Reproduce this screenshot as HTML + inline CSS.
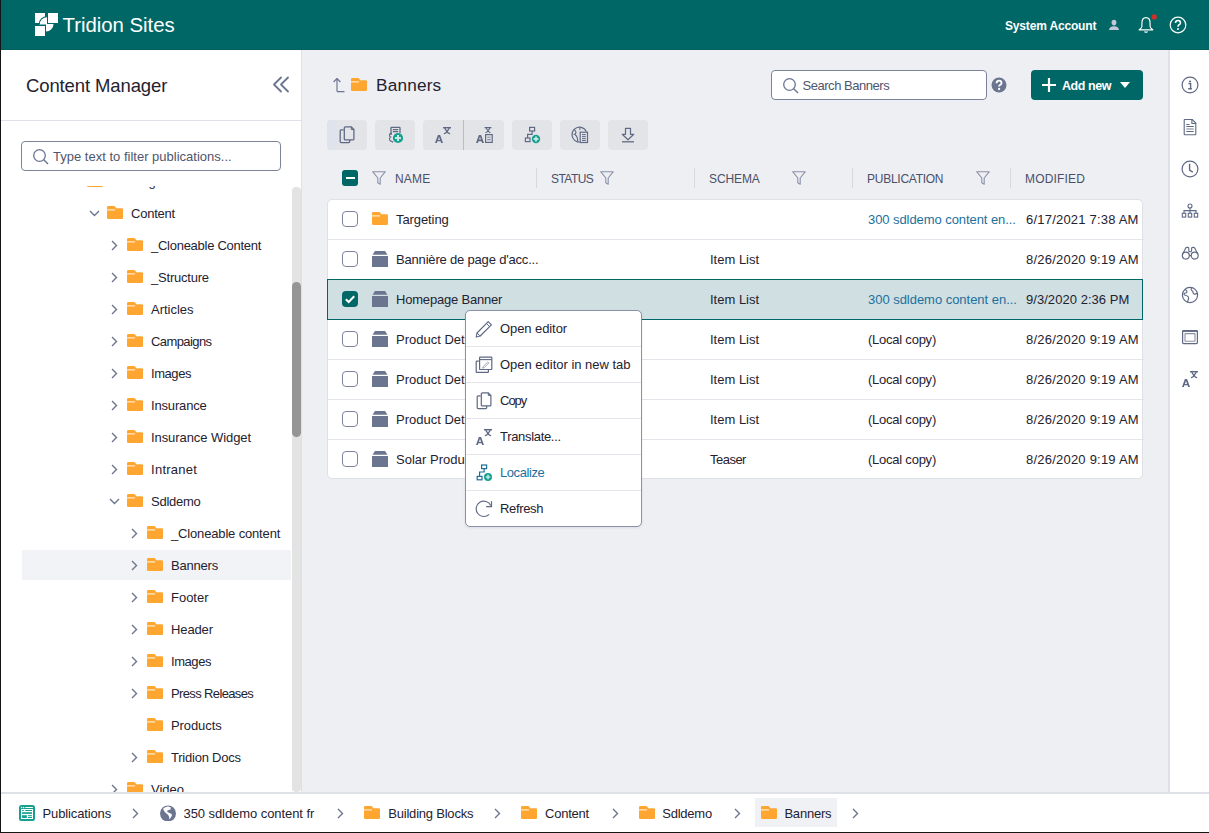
<!DOCTYPE html>
<html><head><meta charset="utf-8">
<style>
*{box-sizing:border-box;margin:0;padding:0}
html,body{width:1209px;height:833px;overflow:hidden;background:#fff}
body{position:relative;font-family:"Liberation Sans",sans-serif;font-size:13px;color:#1f2230}
.a{position:absolute}
.t{position:absolute;white-space:nowrap;line-height:16px}
svg{display:block}
</style></head><body>
<svg width="0" height="0" style="position:absolute">
<defs>
<symbol id="fold" viewBox="0 0 16 13"><path d="M0,1.2Q0,0 1.2,0H7.2Q7.8,0 8.2,.6L9.2,2.2H14.8Q16,2.2 16,3.4V11.8Q16,13 14.8,13H1.2Q0,13 0,11.8Z" fill="#ffa630"/><rect x="0" y="3" width="8" height="1.7" fill="#ffd79a"/></symbol>
<symbol id="comp" viewBox="0 0 16 16"><path d="M3,0H13L15.5,3.8H.5Z" fill="#6b7590"/><rect x="0" y="5" width="16" height="11" fill="#6b7590"/></symbol>
<symbol id="chr" viewBox="0 0 7 11"><path d="M1,1L5.5,5.5L1,10" fill="none" stroke="#6b7590" stroke-width="1.4"/></symbol>
<symbol id="chd" viewBox="0 0 11 7"><path d="M1,1L5.5,5.5L10,1" fill="none" stroke="#6b7590" stroke-width="1.4"/></symbol>
<symbol id="funnel" viewBox="0 0 14 14"><path d="M.7,.7H13.3L8.2,7V13.2L5.8,11.8V7Z" fill="none" stroke="#8a91a8" stroke-width="1.1" stroke-linejoin="round"/></symbol>
<symbol id="trA" viewBox="0 0 16 16"><path fill-rule="evenodd" d="M0,16L2.9,8.1H5.1L8,16H6.2L5.6,14.2H2.4L1.8,16ZM3,12.9H5L4,9.7Z" fill="#5f6983"/><path d="M8,.7H16" stroke="#5f6983" stroke-width="1.4"/><path d="M9.9,1.3L11.8,4.4M14.1,1.3L12.2,4.4M12,4.2Q11.4,6 9.4,6.6M12,4.2Q12.6,6 14.6,6.6" stroke="#5f6983" stroke-width="1.25" fill="none" stroke-linecap="round"/></symbol>
<symbol id="hg" viewBox="0 0 8 7"><path d="M0,.7H8" stroke="#5f6983" stroke-width="1.4"/><path d="M1.9,1.3L3.8,4.4M6.1,1.3L4.2,4.4M4,4.2Q3.4,6 1.4,6.6M4,4.2Q4.6,6 6.6,6.6" stroke="#5f6983" stroke-width="1.25" fill="none" stroke-linecap="round"/></symbol>
<symbol id="Aglyph" viewBox="0 0 8 8"><path fill-rule="evenodd" d="M0,8L2.9,0H5.1L8,8H6.1L5.5,6.2H2.5L1.9,8ZM3,4.6H5L4,1.8Z" fill="#5f6983"/></symbol>
</defs>
</svg>

<!-- frame borders -->
<div class="a" style="left:0;top:0;width:1px;height:833px;background:#141414;z-index:50"></div>
<div class="a" style="left:0;top:832px;width:1209px;height:1px;background:#141414;z-index:50"></div>

<!-- HEADER -->
<div class="a" style="left:0;top:0;width:1209px;height:50px;background:#006767;border-bottom:1px solid #005f5f"></div>
<svg class="a" style="left:35px;top:13px" width="24" height="24" viewBox="0 0 24 24">
<rect x="0" y="0" width="10" height="10" fill="#fff"/>
<rect x="13" y="0" width="10" height="10" fill="#fff"/>
<rect x="0" y="13" width="10" height="10" fill="#fff"/>
<path d="M12,11.5H4.2A7.8,7.8 0 0 1 12,3.7Z" fill="#fff"/>
<path d="M4.2,11.5A7.8,7.8 0 0 1 12,3.7" fill="none" stroke="#006767" stroke-width="1.1"/>
<path d="M11,11H18.5A7.5,7.5 0 0 1 11,18.5Z" fill="#fff"/>
</svg>
<div class="t" style="left:62.5px;top:12.5px;font-size:20.4px;line-height:24px;color:#fff;letter-spacing:-0.033px">Tridion Sites</div>
<div class="t" style="left:1005px;top:18px;font-size:12px;font-weight:bold;color:#fff;letter-spacing:-0.169px">System Account</div>
<svg class="a" style="left:1108px;top:19px" width="12" height="12" viewBox="0 0 12 12"><ellipse cx="6" cy="3.6" rx="2.4" ry="2.8" fill="#c3c7d8"/><path d="M1,11Q1.3,7.6 6,7.3Q10.7,7.6 11,11Z" fill="#c3c7d8"/></svg>
<svg class="a" style="left:1137px;top:14px" width="22" height="22" viewBox="0 0 22 22">
<path d="M9,3.6C5.9,3.6 4.9,6.4 4.9,9.4V12.4C4.9,13.8 3.6,14.8 2.2,15.8H15.8C14.4,14.8 13.1,13.8 13.1,12.4V9.4C13.1,6.4 12.1,3.6 9,3.6Z" fill="none" stroke="#fff" stroke-width="1.15" stroke-linejoin="round"/>
<path d="M7.5,17.5Q9,19 10.5,17.5" fill="none" stroke="#fff" stroke-width="1.1"/>
<circle cx="17.2" cy="3" r="2.7" fill="#c8322b"/>
</svg>
<svg class="a" style="left:1169px;top:16px" width="18" height="18" viewBox="0 0 18 18">
<circle cx="9" cy="9" r="7.8" fill="none" stroke="#fff" stroke-width="1.2"/>
<path d="M6.5,7Q6.5,4.5 9,4.5Q11.5,4.5 11.5,6.8Q11.5,8.3 9.8,9Q9,9.5 9,10.8" fill="none" stroke="#fff" stroke-width="1.5"/>
<circle cx="9" cy="13" r="1" fill="#fff"/>
</svg>

<!-- LEFT PANEL -->
<div class="a" style="left:1px;top:50px;width:300px;height:742px;background:#fff"></div>
<div class="a" style="left:301px;top:50px;width:1px;height:742px;background:#dde0e6"></div>
<div class="t" style="left:26px;top:75px;font-size:18.5px;line-height:22px;color:#1f2230;letter-spacing:-0.114px">Content Manager</div>
<svg class="a" style="left:272px;top:76px" width="18" height="18" viewBox="0 0 18 18"><path d="M9,1.5L2,8.5L9,15.5M16,1.5L9,8.5L16,15.5" fill="none" stroke="#6b7590" stroke-width="1.8" stroke-linecap="round" stroke-linejoin="round"/></svg>
<div class="a" style="left:1px;top:120px;width:300px;height:1px;background:#dfe1e8"></div>
<div class="a" style="left:21px;top:141px;width:260px;height:30px;border:1px solid #7c849c;border-radius:4px;background:#fff"></div>
<svg class="a" style="left:32px;top:148px" width="18" height="18" viewBox="0 0 18 18"><circle cx="7.5" cy="7.5" r="5.8" fill="none" stroke="#6b7590" stroke-width="1.3"/><path d="M11.7,11.7L16,16" stroke="#6b7590" stroke-width="1.4"/></svg>
<div class="t" style="left:53px;top:149px;color:#4f566d;letter-spacing:0.006px">Type text to filter publications...</div>

<!-- tree -->
<div class="a" id="tree" style="left:1px;top:186px;width:291px;height:606px;overflow:hidden">
<svg class="a" style="left:67.5px;top:-8.5px" width="11" height="7"><use href="#chd"/></svg>
<svg class="a" style="left:86px;top:-12px" width="16" height="13"><use href="#fold"/></svg>
<div class="t" style="left:110px;top:-12px;letter-spacing:-0.214px">Building Blocks</div>
<svg class="a" style="left:87.5px;top:23.5px" width="11" height="7"><use href="#chd"/></svg>
<svg class="a" style="left:106px;top:20px" width="16" height="13"><use href="#fold"/></svg>
<div class="t" style="left:130px;top:20px;letter-spacing:-0.233px">Content</div>
<svg class="a" style="left:109.5px;top:54px" width="7" height="11"><use href="#chr"/></svg>
<svg class="a" style="left:126px;top:52px" width="16" height="13"><use href="#fold"/></svg>
<div class="t" style="left:150px;top:52px;letter-spacing:-0.265px">_Cloneable Content</div>
<svg class="a" style="left:109.5px;top:86px" width="7" height="11"><use href="#chr"/></svg>
<svg class="a" style="left:126px;top:84px" width="16" height="13"><use href="#fold"/></svg>
<div class="t" style="left:150px;top:84px;letter-spacing:-0.211px">_Structure</div>
<svg class="a" style="left:109.5px;top:118px" width="7" height="11"><use href="#chr"/></svg>
<svg class="a" style="left:126px;top:116px" width="16" height="13"><use href="#fold"/></svg>
<div class="t" style="left:150px;top:116px;letter-spacing:-0.014px">Articles</div>
<svg class="a" style="left:109.5px;top:150px" width="7" height="11"><use href="#chr"/></svg>
<svg class="a" style="left:126px;top:148px" width="16" height="13"><use href="#fold"/></svg>
<div class="t" style="left:150px;top:148px;letter-spacing:-0.588px">Campaigns</div>
<svg class="a" style="left:109.5px;top:182px" width="7" height="11"><use href="#chr"/></svg>
<svg class="a" style="left:126px;top:180px" width="16" height="13"><use href="#fold"/></svg>
<div class="t" style="left:150px;top:180px;letter-spacing:-0.44px">Images</div>
<svg class="a" style="left:109.5px;top:214px" width="7" height="11"><use href="#chr"/></svg>
<svg class="a" style="left:126px;top:212px" width="16" height="13"><use href="#fold"/></svg>
<div class="t" style="left:150px;top:212px;letter-spacing:-0.162px">Insurance</div>
<svg class="a" style="left:109.5px;top:246px" width="7" height="11"><use href="#chr"/></svg>
<svg class="a" style="left:126px;top:244px" width="16" height="13"><use href="#fold"/></svg>
<div class="t" style="left:150px;top:244px;letter-spacing:-0.073px">Insurance Widget</div>
<svg class="a" style="left:109.5px;top:278px" width="7" height="11"><use href="#chr"/></svg>
<svg class="a" style="left:126px;top:276px" width="16" height="13"><use href="#fold"/></svg>
<div class="t" style="left:150px;top:276px;letter-spacing:0.271px">Intranet</div>
<svg class="a" style="left:107.5px;top:311.5px" width="11" height="7"><use href="#chd"/></svg>
<svg class="a" style="left:126px;top:308px" width="16" height="13"><use href="#fold"/></svg>
<div class="t" style="left:150px;top:308px;letter-spacing:-0.25px">Sdldemo</div>
<svg class="a" style="left:129.5px;top:342px" width="7" height="11"><use href="#chr"/></svg>
<svg class="a" style="left:146px;top:340px" width="16" height="13"><use href="#fold"/></svg>
<div class="t" style="left:170px;top:340px;letter-spacing:-0.159px">_Cloneable content</div>
<div class="a" style="left:21px;top:364px;width:269px;height:30px;background:#f2f3f6"></div>
<svg class="a" style="left:129.5px;top:374px" width="7" height="11"><use href="#chr"/></svg>
<svg class="a" style="left:146px;top:372px" width="16" height="13"><use href="#fold"/></svg>
<div class="t" style="left:170px;top:372px;letter-spacing:-0.2px">Banners</div>
<svg class="a" style="left:129.5px;top:406px" width="7" height="11"><use href="#chr"/></svg>
<svg class="a" style="left:146px;top:404px" width="16" height="13"><use href="#fold"/></svg>
<div class="t" style="left:170px;top:404px;letter-spacing:-0.02px">Footer</div>
<svg class="a" style="left:129.5px;top:438px" width="7" height="11"><use href="#chr"/></svg>
<svg class="a" style="left:146px;top:436px" width="16" height="13"><use href="#fold"/></svg>
<div class="t" style="left:170px;top:436px;letter-spacing:-0.12px">Header</div>
<svg class="a" style="left:129.5px;top:470px" width="7" height="11"><use href="#chr"/></svg>
<svg class="a" style="left:146px;top:468px" width="16" height="13"><use href="#fold"/></svg>
<div class="t" style="left:170px;top:468px;letter-spacing:-0.44px">Images</div>
<svg class="a" style="left:129.5px;top:502px" width="7" height="11"><use href="#chr"/></svg>
<svg class="a" style="left:146px;top:500px" width="16" height="13"><use href="#fold"/></svg>
<div class="t" style="left:170px;top:500px;letter-spacing:-0.631px">Press Releases</div>
<svg class="a" style="left:146px;top:532px" width="16" height="13"><use href="#fold"/></svg>
<div class="t" style="left:170px;top:532px;letter-spacing:-0.086px">Products</div>
<svg class="a" style="left:129.5px;top:566px" width="7" height="11"><use href="#chr"/></svg>
<svg class="a" style="left:146px;top:564px" width="16" height="13"><use href="#fold"/></svg>
<div class="t" style="left:170px;top:564px;letter-spacing:-0.218px">Tridion Docs</div>
<svg class="a" style="left:109.5px;top:598px" width="7" height="11"><use href="#chr"/></svg>
<svg class="a" style="left:126px;top:596px" width="16" height="13"><use href="#fold"/></svg>
<div class="t" style="left:150px;top:596px">Video</div>

</div>
<!-- scrollbar -->
<div class="a" style="left:292px;top:187px;width:9px;height:605px;background:#e3e3e3;border-radius:4px 4px 4px 4px"></div>
<div class="a" style="left:292px;top:282px;width:9px;height:155px;background:#959595;border-radius:4.5px"></div>

<!-- MAIN -->
<div class="a" style="left:302px;top:50px;width:867px;height:742px;background:#eeeff3"></div>
<!-- heading -->
<svg class="a" style="left:332px;top:77px" width="14" height="16" viewBox="0 0 14 16"><path d="M5,14.6H12.5M5,14.6V1.5M1.6,5L5,1.5L8.4,5" fill="none" stroke="#6b7590" stroke-width="1.15" stroke-linejoin="round"/></svg>
<svg class="a" style="left:351px;top:78px" width="16" height="13"><use href="#fold"/></svg>
<div class="t" style="left:376px;top:74px;font-size:17.2px;line-height:22px;color:#1f2230;letter-spacing:0.2px">Banners</div>
<!-- search -->
<div class="a" style="left:771px;top:70px;width:216px;height:30px;border:1px solid #7c849c;border-radius:4px;background:#fff"></div>
<svg class="a" style="left:782px;top:77px" width="18" height="18" viewBox="0 0 18 18"><circle cx="7.5" cy="7.5" r="5.8" fill="none" stroke="#6b7590" stroke-width="1.3"/><path d="M11.7,11.7L16,16" stroke="#6b7590" stroke-width="1.4"/></svg>
<div class="t" style="left:802.5px;top:78px;color:#4f566d;letter-spacing:-0.462px">Search Banners</div>
<svg class="a" style="left:991px;top:76.5px" width="16" height="16" viewBox="0 0 16 16"><circle cx="8" cy="8" r="7.5" fill="#6b7590"/><path d="M5.6,6.2Q5.6,3.6 8,3.6Q10.5,3.6 10.5,5.9Q10.5,7.3 9,8Q8.1,8.5 8.1,9.6" fill="none" stroke="#fff" stroke-width="1.9"/><circle cx="8.1" cy="12" r="1.15" fill="#fff"/></svg>
<!-- add new -->
<div class="a" style="left:1031px;top:70px;width:112px;height:30px;background:#006767;border-radius:4px"></div>
<svg class="a" style="left:1042px;top:78px" width="14" height="14" viewBox="0 0 14 14"><path d="M7,0V14M0,7H14" stroke="#fff" stroke-width="2.2"/></svg>
<div class="t" style="left:1062px;top:78px;font-size:12.5px;font-weight:bold;color:#fff;letter-spacing:-0.417px">Add new</div>
<svg class="a" style="left:1120px;top:82px" width="10" height="6" viewBox="0 0 10 6"><path d="M0,0H10L5,6Z" fill="#fff"/></svg>

<!-- toolbar -->
<div class="a" style="left:327px;top:120px;width:40px;height:30px;background:#e3e4e8;border-radius:4px"></div>
<div class="a" style="left:375px;top:120px;width:40px;height:30px;background:#e3e4e8;border-radius:4px"></div>
<div class="a" style="left:423px;top:120px;width:81px;height:30px;background:#e3e4e8;border-radius:4px"></div>
<div class="a" style="left:463px;top:120px;width:1px;height:30px;background:#b9bdc9"></div>
<div class="a" style="left:512px;top:120px;width:40px;height:30px;background:#e3e4e8;border-radius:4px"></div>
<div class="a" style="left:560px;top:120px;width:40px;height:30px;background:#e3e4e8;border-radius:4px"></div>
<div class="a" style="left:608px;top:120px;width:40px;height:30px;background:#e3e4e8;border-radius:4px"></div>
<!-- toolbar icons -->
<div class="a" style="left:327px;top:120px;width:10px;height:30px;background:#dfe3ec;border-radius:4px 0 0 4px"></div>
<svg class="a" style="left:339px;top:126px" width="16" height="18" viewBox="0 0 16 18"><path d="M4.6,3.8H2.2Q1.2,3.8 1.2,4.8V15.6Q1.2,16.6 2.2,16.6H9.7Q10.7,16.6 10.7,15.6V13.7" fill="none" stroke="#5f6983" stroke-width="1.3"/><path d="M6.3,.9H12.3L14.9,3.5V12.9Q14.9,13.9 13.9,13.9H6.3Q5.3,13.9 5.3,12.9V1.9Q5.3,.9 6.3,.9Z" fill="none" stroke="#5f6983" stroke-width="1.3"/><path d="M12.3,.9V3.5H14.9" fill="none" stroke="#5f6983" stroke-width="1"/></svg>
<svg class="a" style="left:387px;top:126px" width="18" height="18" viewBox="0 0 18 18"><path d="M4,9V2Q4,1.3 4.7,1.3H12.3Q13,1.3 13,2V7" fill="none" stroke="#5f6983" stroke-width="1.3"/><path d="M5.8,3.6H11.2M5.8,5.6H11.2" stroke="#5f6983" stroke-width="1.2"/><path d="M5,7.4Q2.5,7.4 2.5,9.2Q2.5,10.6 3.6,11Q2.5,11.5 2.5,13Q2.5,15 5,15.5Q5.6,16 6.2,16.3" fill="none" stroke="#5f6983" stroke-width="1.1"/><circle cx="11" cy="12" r="5.1" fill="#18a090"/><path d="M11,9V15M8,12H14" stroke="#c8ece5" stroke-width="2"/></svg>
<svg class="a" style="left:435px;top:127px" width="16" height="16"><use href="#trA"/></svg>
<svg class="a" style="left:476px;top:127px" width="8" height="8" style="" viewBox="0 0 8 8"></svg>
<svg class="a" style="left:476px;top:135px" width="8" height="8"><use href="#Aglyph"/></svg>
<svg class="a" style="left:484px;top:127px" width="8" height="6"><use href="#hg"/></svg>
<svg class="a" style="left:485px;top:134px" width="8" height="9" viewBox="0 0 8 9"><rect x=".6" y=".6" width="6.6" height="7.8" fill="none" stroke="#5f6983" stroke-width="1.2"/><path d="M2.2,3.2H5.6M2.2,5.6H5.6" stroke="#5f6983" stroke-width="1.1" opacity=".7"/></svg>
<svg class="a" style="left:524px;top:126px" width="18" height="18" viewBox="0 0 18 18"><rect x="5.6" y="1.4" width="5" height="3.6" fill="none" stroke="#5f6983" stroke-width="1.2"/><path d="M8.1,5V8.4H3.6V12" fill="none" stroke="#5f6983" stroke-width="1.2"/><rect x="1.4" y="12" width="4.6" height="3.6" fill="none" stroke="#5f6983" stroke-width="1.2"/><circle cx="12" cy="13" r="4.2" fill="#18a090"/><path d="M12,10.6V15.4M9.6,13H14.4" stroke="#bfe9e2" stroke-width="1.8"/></svg>
<svg class="a" style="left:571px;top:126px" width="18" height="18" viewBox="0 0 18 18"><path d="M8.5,16.2A7.5,7.5 0 1 1 15.3,5.5" fill="none" stroke="#5f6983" stroke-width="1.2"/><path d="M3.2,3.3Q5,5 5,6.5Q4.5,8 3.5,8.3Q5.5,9.5 6.2,11.5Q6.5,14 7,16" fill="none" stroke="#5f6983" stroke-width="1.1"/><path d="M9,1.5Q8.5,3 9.2,4" fill="none" stroke="#5f6983" stroke-width="1.1"/><rect x="9.2" y="6.2" width="7.3" height="10.3" fill="#e3e4e8" stroke="#5f6983" stroke-width="1.2"/><path d="M11,8.6H14.8M11,10.6H14.8M11,12.6H14.8M11,14.5H14.8" stroke="#5f6983" stroke-width="1"/></svg>
<svg class="a" style="left:620px;top:126px" width="16" height="18" viewBox="0 0 16 18"><path d="M5.5,2.3H10.5V8.3H13.8L8,13.8L2.2,8.3H5.5Z" fill="none" stroke="#5f6983" stroke-width="1.2" stroke-linejoin="round"/><path d="M2,15.8H14" stroke="#5f6983" stroke-width="1.3"/></svg>


<!-- table header -->
<div class="a" style="left:342px;top:170px;width:16px;height:16px;background:#006767;border-radius:3px"></div>
<div class="a" style="left:345.5px;top:177px;width:9px;height:2px;background:#fff"></div>
<svg class="a" style="left:372px;top:171px" width="14" height="14"><use href="#funnel"/></svg>
<div class="t" style="left:395px;top:171px;font-size:12px;color:#4a5068;letter-spacing:0.2px">NAME</div>
<div class="a" style="left:536px;top:168px;width:1px;height:20px;background:#d6d9e0"></div>
<div class="t" style="left:551px;top:171px;font-size:12px;color:#4a5068;letter-spacing:-0.54px">STATUS</div>
<svg class="a" style="left:600px;top:171px" width="14" height="14"><use href="#funnel"/></svg>
<div class="a" style="left:694px;top:168px;width:1px;height:20px;background:#d6d9e0"></div>
<div class="t" style="left:709px;top:171px;font-size:12px;color:#4a5068;letter-spacing:-0.1px">SCHEMA</div>
<svg class="a" style="left:792px;top:171px" width="14" height="14"><use href="#funnel"/></svg>
<div class="a" style="left:852px;top:168px;width:1px;height:20px;background:#d6d9e0"></div>
<div class="t" style="left:867px;top:171px;font-size:12px;color:#4a5068;letter-spacing:-0.26px">PUBLICATION</div>
<svg class="a" style="left:976px;top:171px" width="14" height="14"><use href="#funnel"/></svg>
<div class="a" style="left:1010px;top:168px;width:1px;height:20px;background:#d6d9e0"></div>
<div class="t" style="left:1025px;top:171px;font-size:12px;color:#4a5068;letter-spacing:0.171px">MODIFIED</div>

<!-- table -->
<div class="a" id="table" style="left:327px;top:199px;width:816px;height:280px;background:#fff;border:1px solid #dfe1e8;border-radius:5px">
<div class="a" style="left:14px;top:11px;width:16px;height:16px;border:1.5px solid #7c849c;border-radius:4px"></div>
<svg class="a" style="left:44px;top:12px" width="16" height="13"><use href="#fold"/></svg>
<div class="t" style="left:68px;top:12px;letter-spacing:-0.088px">Targeting</div>
<div class="t" style="left:540px;top:12px;color:#1d6f9c;letter-spacing:-0.071px">300 sdldemo content en...</div>
<div class="t" style="left:698px;top:12px;letter-spacing:0.206px">6/17/2021 7:38 AM</div>
<div class="a" style="left:0;top:39px;width:816px;height:1px;background:#e3e5ea"></div>
<div class="a" style="left:14px;top:51px;width:16px;height:16px;border:1.5px solid #7c849c;border-radius:4px"></div>
<svg class="a" style="left:44px;top:51px" width="16" height="16"><use href="#comp"/></svg>
<div class="t" style="left:68px;top:52px;letter-spacing:-0.183px">Bannière de page d'acc...</div>
<div class="t" style="left:382px;top:52px;letter-spacing:0.0px">Item List</div>
<div class="t" style="left:698px;top:52px;letter-spacing:0.219px">8/26/2020 9:19 AM</div>
<div class="a" style="left:-1px;top:79px;width:816px;height:41px;background:#cfdfe2;border:1px solid #006767"></div>
<svg class="a" style="left:14px;top:91px" width="16" height="16" viewBox="0 0 16 16"><rect width="16" height="16" rx="4" fill="#006767"/><path d="M3.8,8.2L6.7,11L12.2,5.2" fill="none" stroke="#fff" stroke-width="2"/></svg>
<svg class="a" style="left:44px;top:91px" width="16" height="16"><use href="#comp"/></svg>
<div class="t" style="left:68px;top:92px;letter-spacing:-0.2px">Homepage Banner</div>
<div class="t" style="left:382px;top:92px;letter-spacing:0.0px">Item List</div>
<div class="t" style="left:540px;top:92px;color:#1d6f9c;letter-spacing:-0.029px">300 sdldemo content en...</div>
<div class="t" style="left:698px;top:92px;letter-spacing:0.047px">9/3/2020 2:36 PM</div>
<div class="a" style="left:14px;top:131px;width:16px;height:16px;border:1.5px solid #7c849c;border-radius:4px"></div>
<svg class="a" style="left:44px;top:131px" width="16" height="16"><use href="#comp"/></svg>
<div class="t" style="left:68px;top:132px">Product Details 1</div>
<div class="t" style="left:382px;top:132px;letter-spacing:0.0px">Item List</div>
<div class="t" style="left:540px;top:132px;color:#1f2230;letter-spacing:-0.236px">(Local copy)</div>
<div class="t" style="left:698px;top:132px;letter-spacing:0.219px">8/26/2020 9:19 AM</div>
<div class="a" style="left:0;top:159px;width:816px;height:1px;background:#e3e5ea"></div>
<div class="a" style="left:14px;top:171px;width:16px;height:16px;border:1.5px solid #7c849c;border-radius:4px"></div>
<svg class="a" style="left:44px;top:171px" width="16" height="16"><use href="#comp"/></svg>
<div class="t" style="left:68px;top:172px">Product Details 2</div>
<div class="t" style="left:382px;top:172px;letter-spacing:0.0px">Item List</div>
<div class="t" style="left:540px;top:172px;color:#1f2230;letter-spacing:-0.236px">(Local copy)</div>
<div class="t" style="left:698px;top:172px;letter-spacing:0.219px">8/26/2020 9:19 AM</div>
<div class="a" style="left:0;top:199px;width:816px;height:1px;background:#e3e5ea"></div>
<div class="a" style="left:14px;top:211px;width:16px;height:16px;border:1.5px solid #7c849c;border-radius:4px"></div>
<svg class="a" style="left:44px;top:211px" width="16" height="16"><use href="#comp"/></svg>
<div class="t" style="left:68px;top:212px">Product Details 3</div>
<div class="t" style="left:382px;top:212px;letter-spacing:0.0px">Item List</div>
<div class="t" style="left:540px;top:212px;color:#1f2230;letter-spacing:-0.236px">(Local copy)</div>
<div class="t" style="left:698px;top:212px;letter-spacing:0.219px">8/26/2020 9:19 AM</div>
<div class="a" style="left:0;top:239px;width:816px;height:1px;background:#e3e5ea"></div>
<div class="a" style="left:14px;top:251px;width:16px;height:16px;border:1.5px solid #7c849c;border-radius:4px"></div>
<svg class="a" style="left:44px;top:251px" width="16" height="16"><use href="#comp"/></svg>
<div class="t" style="left:68px;top:252px">Solar Products</div>
<div class="t" style="left:382px;top:252px;letter-spacing:-0.52px">Teaser</div>
<div class="t" style="left:540px;top:252px;color:#1f2230;letter-spacing:-0.236px">(Local copy)</div>
<div class="t" style="left:698px;top:252px;letter-spacing:0.219px">8/26/2020 9:19 AM</div>

</div>

<!-- CONTEXT MENU -->
<div class="a" style="left:465px;top:310px;width:177px;height:217px;background:#fff;border:1px solid #8a91a8;border-radius:5px;box-shadow:0 1px 3px rgba(0,0,0,.08)"></div>
<div class="a" style="left:466px;top:346px;width:175px;height:1px;background:#e3e5ea"></div>
<div class="a" style="left:466px;top:382px;width:175px;height:1px;background:#e3e5ea"></div>
<div class="a" style="left:466px;top:418px;width:175px;height:1px;background:#e3e5ea"></div>
<div class="a" style="left:466px;top:454px;width:175px;height:1px;background:#e3e5ea"></div>
<div class="a" style="left:466px;top:490px;width:175px;height:1px;background:#e3e5ea"></div>
<div class="t" style="left:500px;top:321px;letter-spacing:-0.08px">Open editor</div>
<div class="t" style="left:500px;top:357px;letter-spacing:-0.014px">Open editor in new tab</div>
<div class="t" style="left:500px;top:393px;letter-spacing:-1.0px">Copy</div>
<div class="t" style="left:500px;top:429px;letter-spacing:-0.318px">Translate...</div>
<div class="t" style="left:500px;top:465px;color:#1d6f9c;letter-spacing:-0.429px">Localize</div>
<div class="t" style="left:500px;top:501px;letter-spacing:-0.333px">Refresh</div>
<!-- menu icons -->
<svg class="a" style="left:475px;top:320px" width="18" height="18" viewBox="0 0 18 18"><path d="M13.2,1.6L16.4,4.8L5.2,16L1.2,17L2,13Z" fill="none" stroke="#5f6983" stroke-width="1.2" stroke-linejoin="round"/><path d="M11.4,3.4L14.6,6.6M2,13L5.2,16" stroke="#5f6983" stroke-width="1"/></svg>
<svg class="a" style="left:475px;top:356px" width="18" height="18" viewBox="0 0 18 18"><path d="M3.8,5.2H1.8Q1.2,5.2 1.2,5.8V15.8Q1.2,16.4 1.8,16.4H12.8Q13.4,16.4 13.4,15.8V14" fill="none" stroke="#5f6983" stroke-width="1.2"/><rect x="4.6" y="1.1" width="12.2" height="12.4" rx=".6" fill="none" stroke="#5f6983" stroke-width="1.2"/><path d="M4.6,3.6H16.8" stroke="#5f6983" stroke-width="1.1"/><path d="M12.8,6L13.8,7L9,11.8L7.5,12.2L7.9,10.8Z" fill="none" stroke="#9aa0b4" stroke-width=".9"/></svg>
<svg class="a" style="left:476px;top:392px" width="16" height="18" viewBox="0 0 16 18"><path d="M4.6,3.8H2.2Q1.2,3.8 1.2,4.8V15.6Q1.2,16.6 2.2,16.6H9.7Q10.7,16.6 10.7,15.6V13.7" fill="none" stroke="#5f6983" stroke-width="1.2"/><path d="M6.3,.9H12.3L14.9,3.5V12.9Q14.9,13.9 13.9,13.9H6.3Q5.3,13.9 5.3,12.9V1.9Q5.3,.9 6.3,.9Z" fill="none" stroke="#5f6983" stroke-width="1.2"/><path d="M12.3,.9V3.5H14.9" fill="none" stroke="#5f6983" stroke-width="1"/></svg>
<svg class="a" style="left:476px;top:429px" width="16" height="16"><use href="#trA"/></svg>
<svg class="a" style="left:476px;top:464px" width="17" height="18" viewBox="0 0 17 18"><rect x="5.6" y="1" width="5" height="3.6" fill="none" stroke="#1d6f9c" stroke-width="1.2"/><path d="M8.1,4.6V8H3.6V12.4" fill="none" stroke="#1d6f9c" stroke-width="1.2"/><rect x="1.2" y="12.4" width="4.8" height="3.4" fill="none" stroke="#1d6f9c" stroke-width="1.2"/><circle cx="12" cy="13" r="4" fill="#18a090"/><path d="M12,10.8V15.2M9.8,13H14.2" stroke="#bfe9e2" stroke-width="1.6"/></svg>
<svg class="a" style="left:475px;top:500px" width="18" height="18" viewBox="0 0 18 18"><path d="M14.1,14.41A7.65,7.65 0 1 1 15.74,5.53" fill="none" stroke="#5f6983" stroke-width="1.15"/><path d="M16.5,1.2V6.6H11.1" fill="none" stroke="#5f6983" stroke-width="1.2"/></svg>


<!-- RIGHT SIDEBAR -->
<div class="a" style="left:1168px;top:50px;width:2px;height:742px;background:#dfe1e8"></div>
<div class="a" style="left:1170px;top:50px;width:39px;height:742px;background:#fff"></div>

<!-- sidebar icons -->
<svg class="a" style="left:1181px;top:76px" width="18" height="18" viewBox="0 0 18 18"><circle cx="9" cy="9" r="7.9" fill="none" stroke="#5f6983" stroke-width="1.2"/><circle cx="9" cy="5.5" r="1.1" fill="#5f6983"/><path d="M7.4,7.6H9.6V12.6M7.2,12.8H10.9" fill="none" stroke="#5f6983" stroke-width="1.4"/></svg>
<svg class="a" style="left:1183px;top:118px" width="14" height="18" viewBox="0 0 14 18"><path d="M1.8,1.5H9.3L12.8,5V16Q12.8,16.7 12.1,16.7H1.9Q1.2,16.7 1.2,16V2.2Q1.2,1.5 1.8,1.5Z" fill="none" stroke="#5f6983" stroke-width="1.1"/><path d="M8.9,1.5V5.5H12.8" fill="none" stroke="#5f6983" stroke-width="1.1"/><path d="M3.3,6.5H6.5M3.3,8.5H10.7M3.3,13.5H10.7" stroke="#5f6983" stroke-width="1"/><path d="M3.3,11H10.7" stroke="#aab0c0" stroke-width="1.6"/></svg>
<svg class="a" style="left:1181px;top:160px" width="18" height="18" viewBox="0 0 18 18"><circle cx="9" cy="9" r="7.9" fill="none" stroke="#5f6983" stroke-width="1.2"/><path d="M8.6,3.8V10.2L11.8,12.2" fill="none" stroke="#5f6983" stroke-width="1.4"/></svg>
<svg class="a" style="left:1181px;top:203px" width="18" height="16" viewBox="0 0 18 16"><circle cx="9" cy="3" r="2" fill="none" stroke="#5f6983" stroke-width="1.1"/><path d="M9,5V7.6M3,10V7.6H15V10M9,7.6V10" fill="none" stroke="#5f6983" stroke-width="1.1"/><rect x="1.3" y="10.3" width="3.4" height="3.8" fill="none" stroke="#5f6983" stroke-width="1.1"/><rect x="7.3" y="10.3" width="3.4" height="3.8" fill="none" stroke="#5f6983" stroke-width="1.1"/><rect x="13.3" y="10.3" width="3.4" height="3.8" fill="none" stroke="#5f6983" stroke-width="1.1"/></svg>
<svg class="a" style="left:1181px;top:245px" width="18" height="16" viewBox="0 0 18 16"><circle cx="4.8" cy="10.6" r="3.5" fill="none" stroke="#5f6983" stroke-width="1.2"/><circle cx="13.7" cy="10.6" r="3.5" fill="none" stroke="#5f6983" stroke-width="1.2"/><path d="M8.3,10.6H10.2" stroke="#5f6983" stroke-width="1.2"/><path d="M1.7,9L4.6,3.2Q5,2.4 5.9,2.4H6.8Q7.8,2.4 7.8,3.4V5.8Q7.8,6.8 9.2,6.8Q10.6,6.8 10.6,5.8V3.4Q10.6,2.4 11.6,2.4H12.5Q13.4,2.4 13.8,3.2L16.7,9" fill="none" stroke="#5f6983" stroke-width="1.1"/></svg>
<svg class="a" style="left:1181px;top:286px" width="18" height="18" viewBox="0 0 18 18"><circle cx="9" cy="9" r="7.6" fill="none" stroke="#5f6983" stroke-width="1.2"/><path d="M4,3.4Q6.3,4.5 6,6.2Q4.5,7.5 3.5,7.2Q2.5,8 3.5,9Q6,9.4 7.3,10.8Q8,12.5 7,14.5L6.3,16.4" fill="none" stroke="#5f6983" stroke-width="1.1"/><path d="M10.5,1.8Q9.6,3.5 10.8,4.6Q12.4,5 12,6.8Q12.6,8.4 14,8.1L16.5,7.4" fill="none" stroke="#5f6983" stroke-width="1.1"/></svg>
<svg class="a" style="left:1181px;top:329px" width="18" height="16" viewBox="0 0 18 16"><rect x="1.6" y="1.6" width="14.8" height="13" rx="1" fill="none" stroke="#5f6983" stroke-width="1.2"/><path d="M1.6,2H16.4" stroke="#5f6983" stroke-width="1.8"/><rect x="4" y="4.6" width="10" height="7.6" rx=".5" fill="none" stroke="#8a91a8" stroke-width="1.1"/></svg>
<svg class="a" style="left:1182px;top:371px" width="16" height="16"><use href="#trA"/></svg>

<!-- FOOTER -->
<div class="a" style="left:1px;top:792px;width:1208px;height:2px;background:#dfe1e8"></div>
<div class="a" style="left:1px;top:794px;width:1208px;height:38px;background:#fff"></div>
<svg class="a" style="left:19px;top:805px" width="16" height="16" viewBox="0 0 16 16"><rect width="16" height="16" rx="2.5" fill="#17a08f"/><rect x="2" y="4" width="12" height="10" fill="#fff"/><circle cx="2.6" cy="2.5" r=".75" fill="#fff"/><circle cx="4.6" cy="2.5" r=".75" fill="#fff"/><rect x="6.2" y="2" width="7.7" height="1" fill="#fff"/><rect x="3.1" y="5" width="1.7" height="1" fill="#17a08f"/><rect x="6.25" y="5" width="6.75" height="1" fill="#17a08f"/><rect x="3.1" y="7.2" width="9.9" height="1.7" fill="#17a08f"/><rect x="3.1" y="10.2" width="4.7" height="2.8" fill="#17a08f"/><rect x="9" y="10.2" width="4" height="1" fill="#17a08f"/><rect x="9" y="12" width="4" height="1" fill="#17a08f"/></svg>
<div class="t" style="left:42.5px;top:806px;letter-spacing:-0.127px">Publications</div>
<svg class="a" style="left:132px;top:808px" width="7" height="11"><use href="#chr"/></svg>
<svg class="a" style="left:160px;top:805px" width="16" height="16" viewBox="0 0 16 16"><circle cx="8" cy="8.5" r="8" fill="#6b7590"/><path d="M3.4,3.2Q5.5,1.5 8.5,1.2L8.9,2L10.8,2.3L10.6,4.4Q8.5,4.6 7.4,5.8L7.1,6.7Q7.8,7.3 8.5,7.5L11.1,8.7L12,9.8Q11.8,11.2 11.1,12.1L9.4,14.6Q9.3,12.3 8.8,11Q8,9.5 7.1,9Q5.8,8.2 4.8,7Q3.8,5.8 3.4,4.6Z" fill="#fff"/></svg>
<div class="t" style="left:183.5px;top:806px;letter-spacing:-0.071px">350 sdldemo content fr</div>
<svg class="a" style="left:337px;top:808px" width="7" height="11"><use href="#chr"/></svg>
<svg class="a" style="left:364px;top:806px" width="16" height="13"><use href="#fold"/></svg>
<div class="t" style="left:388.3px;top:806px;letter-spacing:-0.214px">Building Blocks</div>
<svg class="a" style="left:494px;top:808px" width="7" height="11"><use href="#chr"/></svg>
<svg class="a" style="left:521px;top:806px" width="16" height="13"><use href="#fold"/></svg>
<div class="t" style="left:545px;top:806px;letter-spacing:-0.233px">Content</div>
<svg class="a" style="left:612px;top:808px" width="7" height="11"><use href="#chr"/></svg>
<svg class="a" style="left:639px;top:806px" width="16" height="13"><use href="#fold"/></svg>
<div class="t" style="left:662.3px;top:806px;letter-spacing:-0.25px">Sdldemo</div>
<svg class="a" style="left:734px;top:808px" width="7" height="11"><use href="#chr"/></svg>
<div class="a" style="left:755px;top:798px;width:82px;height:29px;background:#f0f1f4"></div>
<svg class="a" style="left:761px;top:806px" width="16" height="13"><use href="#fold"/></svg>
<div class="t" style="left:784.4px;top:806px;letter-spacing:-0.2px">Banners</div>
<svg class="a" style="left:852px;top:808px" width="7" height="11"><use href="#chr"/></svg>

</body></html>
